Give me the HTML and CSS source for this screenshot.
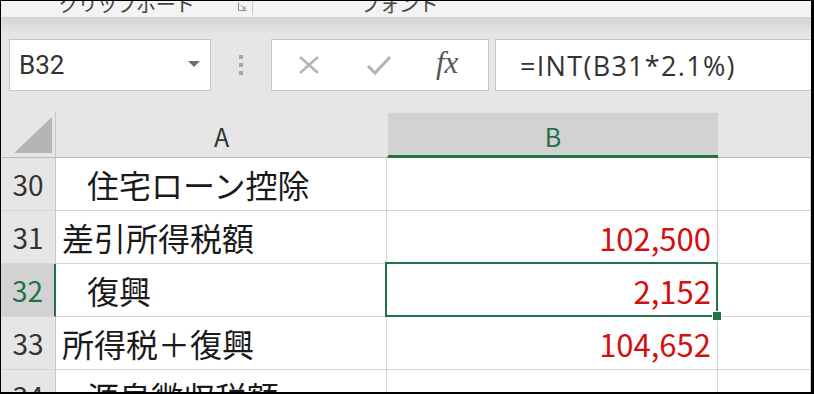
FILE: index.html
```html
<!DOCTYPE html>
<html lang="ja">
<head>
  <meta charset="UTF-8" />
  <title>Excel - 復興特別所得税</title>
  <link rel="stylesheet" href="styles.css">
</head>
<body>
  <div class="window">

    <!-- Cinta (solo la parte inferior visible) -->
    <div class="ribbon">
      <div class="group group-clip">
        <span class="group-label">クリップボード</span>
        <svg class="launcher" width="9" height="9" viewBox="0 0 9 9">
          <path d="M0.5 0.5 V8.5 H8.5" fill="none" stroke="#8a8a8a" stroke-width="1"/>
          <path d="M3 3 L7 7 M7 4.5 V7 H4.5" fill="none" stroke="#8a8a8a" stroke-width="1"/>
        </svg>
      </div>
      <div class="group group-font">
        <span class="group-label">フォント</span>
      </div>
    </div>

    <!-- Barra de fórmulas -->
    <div class="formula-area">
      <div class="name-box">
        <span>B32</span>
        <span class="caret"></span>
      </div>
      <div class="grip"><i></i><i></i><i></i></div>
      <div class="fx-buttons">
        <svg width="22" height="20" viewBox="0 0 22 20">
          <path d="M2 2 L20 18 M20 2 L2 18" stroke="#b3b3b3" stroke-width="2.4" fill="none"/>
        </svg>
        <svg width="26" height="22" viewBox="0 0 26 22">
          <path d="M2 12 L9 19 L24 3" stroke="#b3b3b3" stroke-width="3" fill="none"/>
        </svg>
        <span class="fx">fx</span>
      </div>
      <div class="formula">=INT(B31*2.1%)</div>
    </div>

    <!-- Hoja -->
    <div class="sheet">
      <div class="corner">
        <svg width="54" height="45" viewBox="0 0 54 45">
          <polygon points="13,41 51,5 51,41" fill="#b5b5b5"/>
        </svg>
      </div>
      <div class="col-head">A</div>
      <div class="col-head active">B</div>
      <div class="col-head empty"></div>

      <div class="row-head">30</div>
      <div class="cell indent">住宅ローン控除</div>
      <div class="cell num"></div>
      <div class="cell"></div>

      <div class="row-head">31</div>
      <div class="cell">差引所得税額</div>
      <div class="cell num">102,500</div>
      <div class="cell"></div>

      <div class="row-head active">32</div>
      <div class="cell indent">復興</div>
      <div class="cell num selected">2,152</div>
      <div class="cell"></div>

      <div class="row-head">33</div>
      <div class="cell">所得税＋復興</div>
      <div class="cell num">104,652</div>
      <div class="cell"></div>

      <div class="row-head">34</div>
      <div class="cell indent">源泉徴収税額</div>
      <div class="cell num"></div>
      <div class="cell"></div>
    </div>

  </div>
</body>
</html>
```

FILE: styles.css
```css
/* Base */
* { box-sizing: border-box; margin: 0; padding: 0; }
body {
  background: #fff;
  overflow: hidden;
}

/* Marco de la captura */
.window {
  width: 814px;
  height: 394px;
  border-style: solid;
  border-color: #000;
  border-width: 1px 3px 2px 1px;
  background: #e6e6e6;
  overflow: hidden;
  display: flex;
  flex-direction: column;
}

/* Cinta */
.ribbon {
  height: 17px;
  flex: none;
  display: flex;
  background: #f3f3f3;
  border-bottom: 1px solid #d3d3d3;
  overflow: hidden;
  font-family: "Noto Sans CJK JP", sans-serif;
  color: #444;
}
.group {
  display: flex;
  justify-content: center;
  align-items: flex-end;
  position: relative;
}
.group-clip {
  width: 252px;
  border-right: 1px solid #c8c8c8;
  height: 14px;
}
.group-font {
  width: 292px;
}
.group-label {
  font-size: 20px;
  line-height: 24px;
  margin-top: -9px;
  align-self: flex-start;
  letter-spacing: -0.5px;
}
.launcher {
  position: absolute;
  right: 5px;
  top: 1px;
}

/* Barra de fórmulas */
.formula-area {
  height: 94px;
  flex: none;
  display: flex;
  align-items: flex-start;
  padding: 21px 0 0 8px;
  background: linear-gradient(#d5d5d5, #e6e6e6 16px);
}
.name-box,
.fx-buttons,
.formula {
  height: 52px;
  background: #fff;
  border: 1px solid #c6c6c6;
  display: flex;
  align-items: center;
}
.name-box {
  width: 202px;
  padding: 0 10px 0 9px;
  justify-content: space-between;
  font-family: Roboto, sans-serif;
  font-size: 26px;
  color: #333;
}
.caret {
  width: 0;
  height: 0;
  border-left: 6px solid transparent;
  border-right: 6px solid transparent;
  border-top: 6px solid #6e6e6e;
  margin-bottom: 2px;
}
.grip {
  width: 60px;
  height: 52px;
  display: flex;
  flex-direction: column;
  align-items: center;
  justify-content: center;
  gap: 4px;
}
.grip i {
  width: 4px;
  height: 4px;
  background: #a6a6a6;
}
.fx-buttons {
  width: 218px;
  padding: 0 0 0 26px;
}
.fx-buttons svg:first-child { margin-right: 46px; }
.fx-buttons svg:nth-child(2) { margin-right: 44px; }
.fx {
  font-family: "Liberation Serif", serif;
  font-style: italic;
  font-size: 31px;
  color: #555;
  margin-top: -4px;
}
.formula {
  flex: 1;
  margin-left: 6px;
  border-right: none;
  padding-left: 24px;
  font-family: "Open Sans", sans-serif;
  font-size: 27px;
  letter-spacing: 1.3px;
  color: #333;
}

/* Hoja */
.sheet {
  flex: none;
  display: grid;
  grid-template-columns: 55px 331px 331px 1fr;
  grid-template-rows: 46px repeat(5, 53px);
  background: #fff;
  font-family: "Noto Sans CJK JP", sans-serif;
}
.corner,
.col-head {
  background: #e6e6e6;
  border-bottom: 1px solid #b9b9b9;
}
.corner {
  border-right: 1px solid #c6c6c6;
}
.corner svg { display: block; }
.col-head {
  display: flex;
  align-items: center;
  justify-content: center;
  font-size: 25px;
  color: #333;
  padding-top: 2px;
}
.col-head.active {
  background: #d2d2d2;
  color: #217346;
  border-top: 1px solid #e2e2e2;
  border-left: 1px solid #e2e2e2;
  border-bottom: 2px solid #217346;
  box-shadow: inset 0 -1px #217346;
}
.row-head {
  background: #e6e6e6;
  border-right: 1px solid #c6c6c6;
  border-bottom: 1px solid #d4d4d4;
  display: flex;
  align-items: center;
  justify-content: center;
  font-size: 28px;
  color: #333;
}
.row-head.active {
  background: #d2d2d2;
  color: #217346;
  border-right: 2px solid #217346;
}
.cell {
  border-right: 1px solid #d4d4d4;
  border-bottom: 1px solid #d4d4d4;
  display: flex;
  align-items: center;
  padding: 0 6px;
  font-size: 32px;
  color: #1a1a1a;
  white-space: nowrap;
}
.cell.indent { padding-left: 31px; }
.cell.num {
  justify-content: flex-end;
  color: #d40f0f;
  font-size: 31px;
}

/* Celda activa */
.selected { position: relative; }
.selected::after {
  content: "";
  position: absolute;
  left: -2px;
  top: -2px;
  right: -1px;
  bottom: -1px;
  border: 2px solid #217346;
}
.selected::before {
  content: "";
  position: absolute;
  right: -5px;
  bottom: -5px;
  width: 8px;
  height: 8px;
  background: #217346;
  border: 1px solid #fff;
  z-index: 1;
}
```
